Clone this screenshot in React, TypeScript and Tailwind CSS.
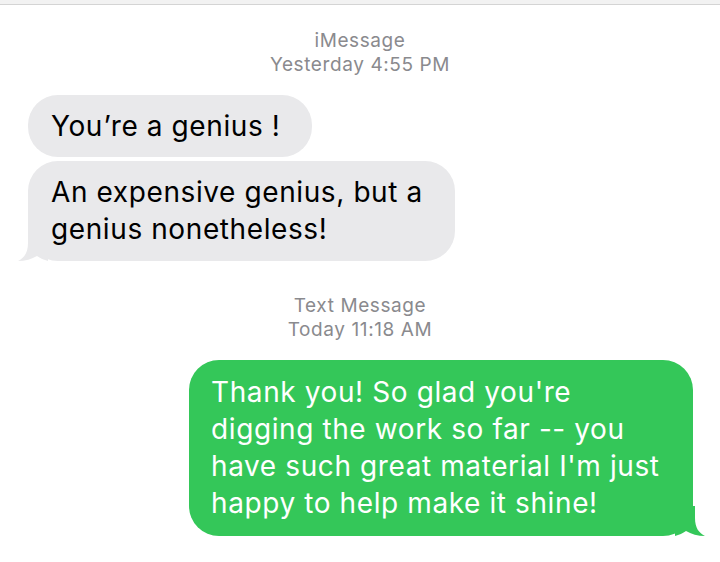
const font = { fontFamily: "Inter, 'Liberation Sans', sans-serif" };

function TailLeft() {
  return (
    <svg className="absolute bottom-0 left-[-10px]" width="30" height="30" viewBox="0 0 30 30">
      <path d="M10 0 L10 12 C10 22 6 27 0 30 C7 30 14 28 19 25 C22 27 26 29 30 30 L30 0 Z" fill="#e9e9eb" />
    </svg>
  );
}

function TailRight() {
  return (
    <svg className="absolute bottom-0 right-[-12px]" width="30" height="30" viewBox="0 0 30 30">
      <path d="M20 0 L20 12 C20 22 24 27 30 30 C23 30 16 28 11 25 C8 27 4 29 0 30 L0 0 Z" fill="#34c759" />
    </svg>
  );
}

function Stamp({ kind, time }: { kind: string; time: string }) {
  return (
    <div className="text-center text-[19px] leading-[24px] tracking-[0.6px] text-[#8a8a8e]">
      <div>{kind}</div>
      <div>{time}</div>
    </div>
  );
}

export default function App() {
  return (
    <div className="h-[562px] w-[720px] overflow-hidden bg-white" style={font}>
      <div className="h-[4px] bg-[#f2f2f2]" />
      <div className="h-px bg-[#d4d4d4]" />
      <div className="flex flex-col pt-[24px]">
        <Stamp kind="iMessage" time="Yesterday 4:55 PM" />
        <div className="mt-[18px] flex flex-col items-start gap-[4px] pl-[28px] text-[28px] tracking-[0.6px]">
          <div className="flex h-[62px] w-[284px] items-center rounded-[30px] bg-[#e9e9eb] pl-[23px] text-black">
            You’re a genius !
          </div>
          <div className="relative w-[427px] rounded-[30px] bg-[#e9e9eb] py-[13px] pl-[23px] leading-[37px] text-black">
            <TailLeft />
            <span className="relative">An expensive genius, but a<br />genius nonetheless!</span>
          </div>
        </div>
        <div className="mt-[33px]">
          <Stamp kind="Text Message" time="Today 11:18 AM" />
        </div>
        <div className="mt-[18px] flex justify-end pr-[27px]">
          <div className="relative w-[504px] rounded-[30px] bg-[#34c759] py-[14px] pl-[22px] text-[28px] leading-[37px] tracking-[0.6px] text-white">
            <TailRight />
            <span className="relative">
              Thank you! So glad you're<br />digging the work so far -- you<br />have such great material I'm just<br />happy to help make it shine!
            </span>
          </div>
        </div>
      </div>
    </div>
  );
}
